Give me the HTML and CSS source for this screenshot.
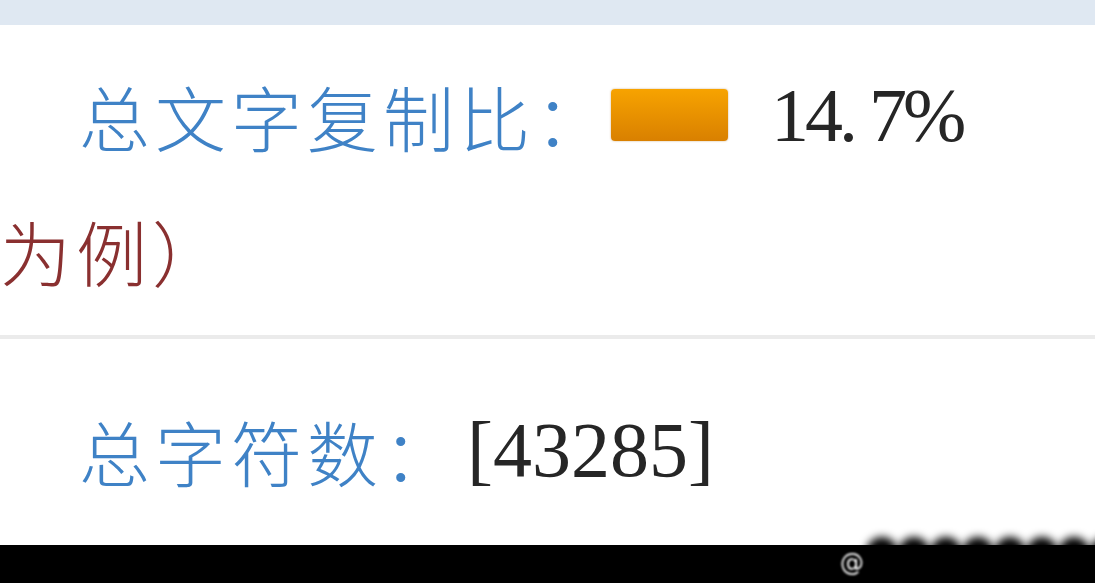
FILE: index.html
```html
<!DOCTYPE html>
<html lang="zh-CN">
<head>
    <meta charset="UTF-8">
    <meta name="viewport" content="width=device-width, initial-scale=1.0">
    <title>检测报告</title>
    <link rel="stylesheet" href="styles.css">
</head>
<body>
    <div class="top-band"></div>

    <div class="report">
        <div class="row row-ratio">
            <span class="label">总文字复制比：</span>
            <span class="ratio-bar"></span>
            <span class="value value-ratio">14. 7%</span>
        </div>

        <div class="row row-note">
            <span class="note">为例）</span>
        </div>

        <div class="divider"></div>

        <div class="row row-count">
            <span class="label">总字符数：</span>
            <span class="value">[43285]</span>
        </div>
    </div>

    <footer class="bottom-bar">
        <div class="mark">
            <span class="mark-at">@</span>
            <span class="blob"></span>
            <span class="blob"></span>
            <span class="blob"></span>
            <span class="blob"></span>
            <span class="blob"></span>
            <span class="blob"></span>
            <span class="blob"></span>
            <span class="blob"></span>
        </div>
    </footer>
</body>
</html>
```

FILE: styles.css
```css
body {
    margin: 0;
    width: 1095px;
    height: 583px;
    overflow: hidden;
    display: flex;
    flex-direction: column;
    background-color: #ffffff;
    font-family: "Noto Sans CJK SC", "Liberation Serif", sans-serif;
}

.top-band {
    height: 25px;
    background-color: #dfe8f2; /* pale blue header strip */
    flex-shrink: 0;
}

.report {
    display: flex;
    flex-direction: column;
}

.row {
    display: flex;
    align-items: center;
}

.row-ratio {
    height: 180px;
    padding-left: 79px;
}

.row-note {
    height: 90px;
}

.row-count {
    height: 180px;
    margin-top: 21px;
    padding-left: 79px;
}

.label,
.note {
    font-size: 71px;
    font-weight: 300;
    letter-spacing: 5px;
    line-height: 1;
}

.label {
    color: #3f82c6; /* report blue */
}

.note {
    color: #8a3030; /* dark red remark */
}

.ratio-bar {
    width: 117px;
    height: 52px;
    margin-right: 43px;
    border-radius: 4px;
    background: linear-gradient(#f7a300, #d98000);
    box-shadow: 0 0 2px rgba(150, 90, 0, 0.5);
}

.value {
    font-family: "Liberation Serif", serif;
    font-size: 78px;
    color: #262626;
    line-height: 1;
    margin-left: 8px;
}

.value-ratio {
    font-size: 76px;
    letter-spacing: -4px;
    margin-left: 0;
}

.divider {
    height: 4px;
    margin-top: 40px;
    background-color: #ebebeb;
}

.bottom-bar {
    margin-top: auto;
    height: 38px;
    background-color: #000000;
    position: relative;
    flex-shrink: 0;
}

/* blurred watermark sitting on the bar's top edge */
.mark {
    position: absolute;
    left: 840px;
    top: -16px;
    display: flex;
    align-items: center;
}

.mark-at {
    font-family: "DejaVu Sans", sans-serif;
    font-size: 24px;
    color: #ffffff;
    margin-top: 20px;
    margin-right: 2px;
    filter: blur(1px);
}

.blob {
    width: 32px;
    height: 32px;
    border-radius: 50%;
    background-color: #000000;
    filter: blur(4px);
}
```
